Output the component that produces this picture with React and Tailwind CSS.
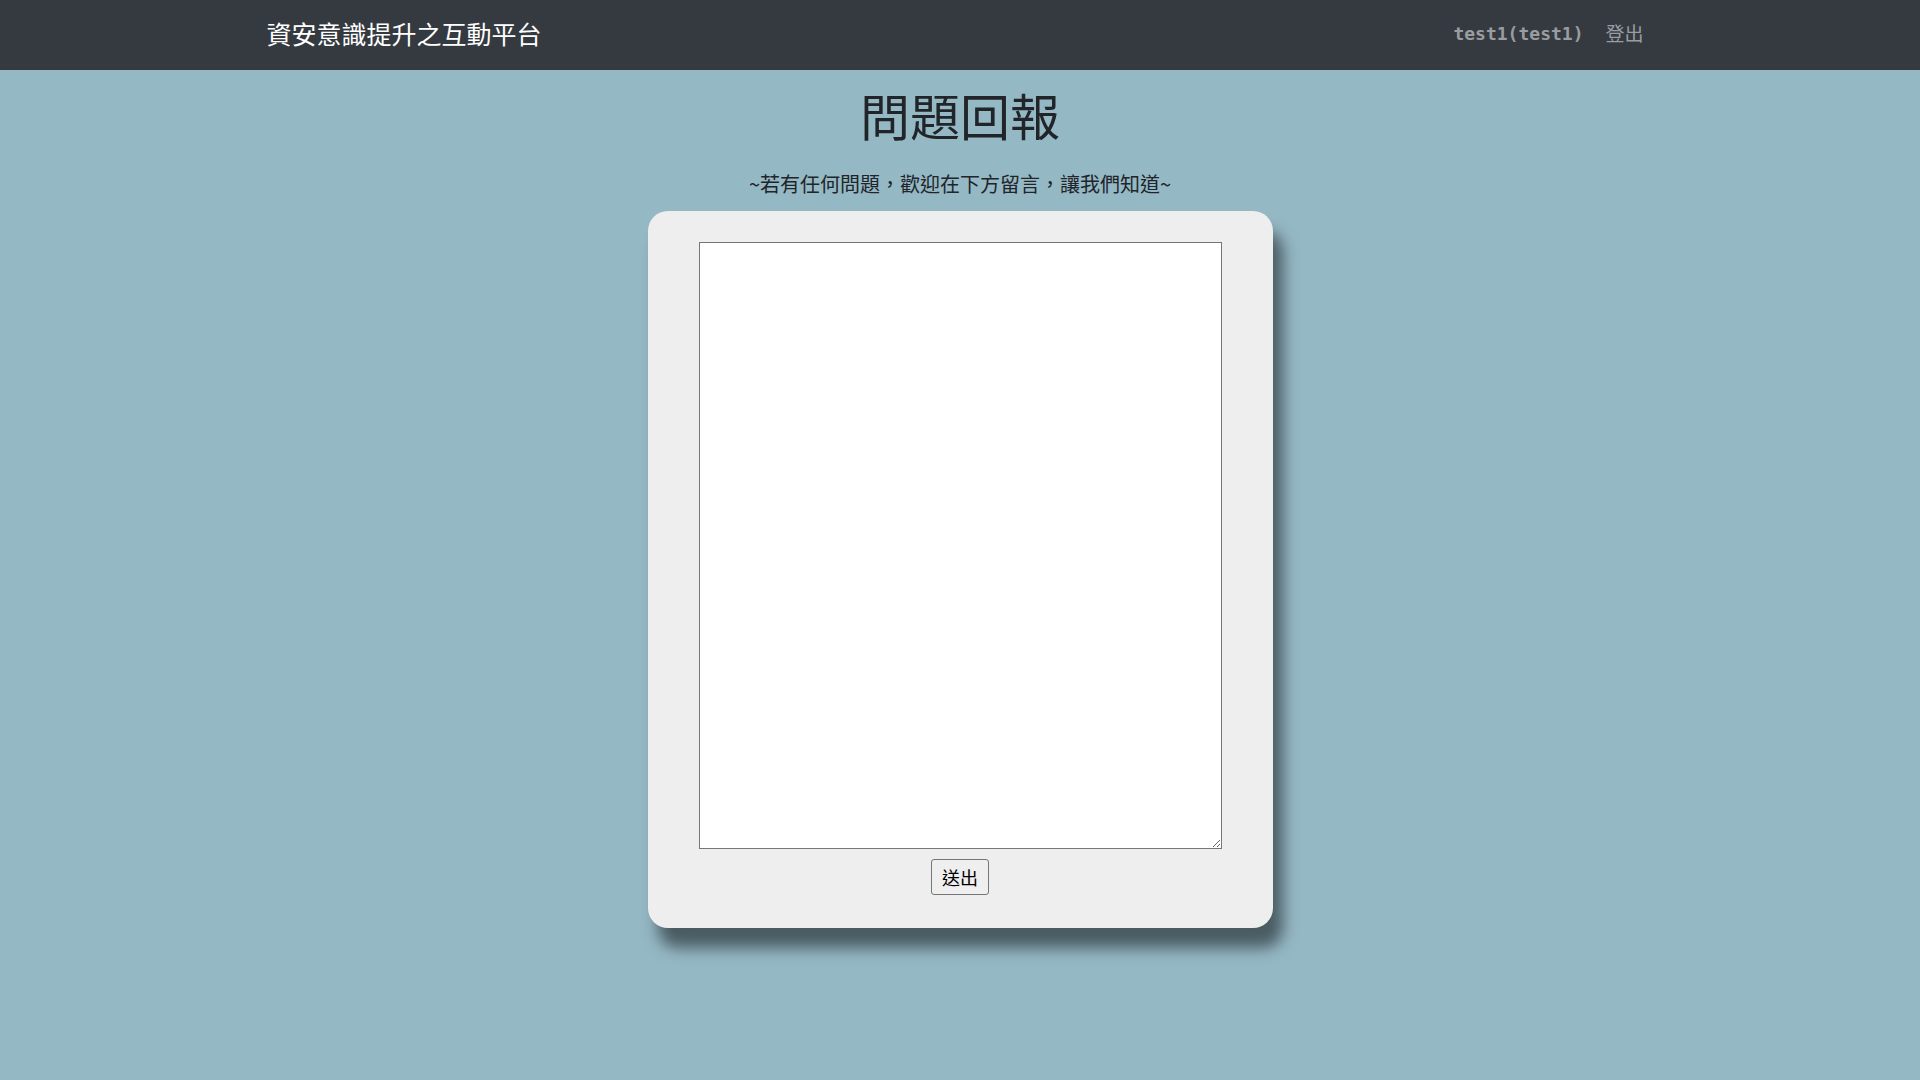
import React from 'react';

const cjk = { fontFamily: '"Noto Sans CJK TC", "Noto Sans", sans-serif' };

export default function App() {
    return (
        <div className="min-h-screen bg-[#95b8c5] text-[#212529]" style={cjk}>
            {/* Navbar */}
            <nav className="h-[70px] bg-[#343a40]">
                <div className="mx-auto flex h-full w-[1425px] items-center justify-between px-[19px] pb-[4px]">
                    <a className="text-[25px] leading-[30px] text-white">資安意識提升之互動平台</a>
                    <div className="flex items-center">
                        <span
                            className="px-[10px] text-[18px] font-bold text-[#9a9da0]"
                            style={{ fontFamily: '"DejaVu Sans Mono", "Liberation Mono", monospace' }}
                        >
                            test1(test1)
                        </span>
                        <a className="pl-[12px] pr-[10px] text-[19px] text-[#9a9da0]">登出</a>
                    </div>
                </div>
            </nav>

            {/* Content */}
            <main className="flex flex-col items-center">
                <h1 className="mt-[14px] text-[50px] font-normal leading-[60px]">問題回報</h1>
                <p className="mt-[25px] text-[20px] leading-[30px]">~若有任何問題，歡迎在下方留言，讓我們知道~</p>
                <div className="mt-[12px] flex h-[717px] w-[625px] flex-col items-center rounded-[20px] bg-[#eeeeee] pt-[31px] shadow-[10px_20px_15px_rgba(0,0,0,0.5)]">
                    <textarea className="h-[607px] w-[523px] border border-[#767676] bg-white p-[2px] text-[16px]" />
                    <button className="mt-[10px] h-[36px] rounded-[3px] border border-[#767676] bg-[#efefef] px-[10px] text-[18px] leading-none text-black">
                        送出
                    </button>
                </div>
            </main>
        </div>
    );
}
